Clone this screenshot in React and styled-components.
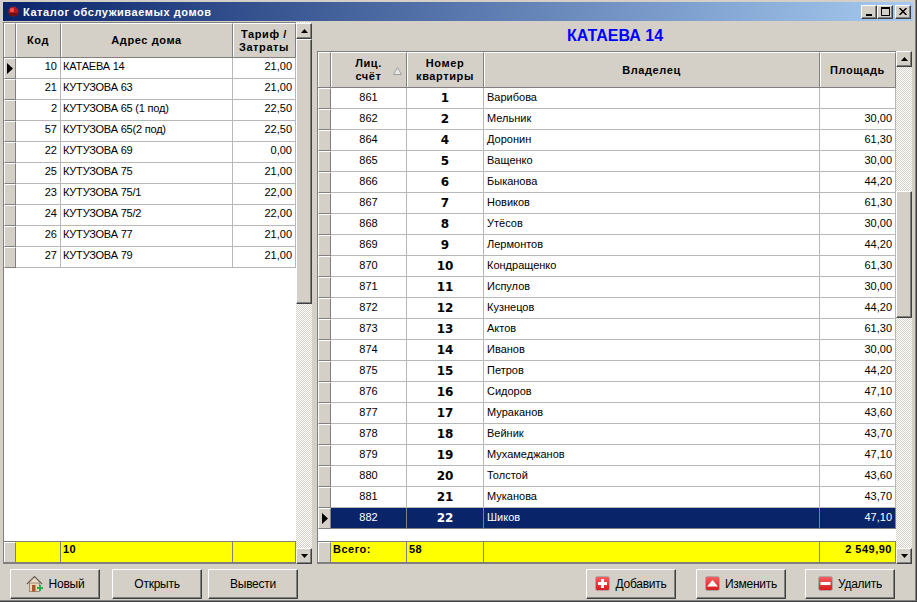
import React from "react";
import styled, { createGlobalStyle, css } from "styled-components";

const Global = createGlobalStyle`
  html, body { margin: 0; padding: 0; background: #d4d0c8; }
  #root { width: 917px; height: 602px; overflow: hidden; }
  * { box-sizing: border-box; }
`;

const face = "#d4d0c8";
const checker = css`
  background-color: #fff;
  background-image: conic-gradient(${face} 25%, #fff 0 50%, ${face} 0 75%, #fff 0);
  background-size: 2px 2px;
`;
const raised = css`
  border-top: 1px solid #fff;
  border-left: 1px solid #fff;
  border-right: 1px solid #404040;
  border-bottom: 1px solid #404040;
  box-shadow: inset -1px -1px 0 #808080;
`;

const Window = styled.div`
  width: 917px;
  height: 602px;
  display: flex;
  flex-direction: column;
  background: ${face};
  padding: 2px 3px 0 3px;
  border-right: 1px solid #404040;
  border-bottom: 1px solid #404040;
  box-shadow: inset -1px -1px 0 #808080;
  font-family: "Liberation Sans", Arial, sans-serif;
  font-size: 11px;
  color: #000;
`;
const TitleBar = styled.div`
  height: 19px;
  flex: none;
  display: flex;
  align-items: center;
  padding: 0 2px 0 4px;
  background: linear-gradient(90deg, #0a246a, #a6caf0);
  color: #fff;
  font-weight: 700;
  font-size: 11px;
  letter-spacing: 0.57px;
`;
const TitleText = styled.span`
  flex: 1;
  margin-left: 3px;
`;
const CaptionBtn = styled.div`
  width: 16px;
  height: 14px;
  background: ${face};
  ${raised}
  margin-left: ${(p) => p.$gap || 0}px;
  display: flex;
  align-items: center;
  justify-content: center;
`;
const Body = styled.div`
  flex: none;
  display: flex;
  height: 543px;
`;
const LeftPane = styled.div`
  width: 309px;
  padding-top: 1px;
  display: flex;
`;
const RightPane = styled.div`
  margin-left: 5px;
  width: 596px;
  display: flex;
  flex-direction: column;
`;
const Heading = styled.div`
  height: 30px;
  flex: none;
  display: flex;
  align-items: center;
  justify-content: center;
  color: #0000ff;
  font-weight: 700;
  font-size: 16px;
`;
const GridRow = styled.div`
  flex: 1;
  display: flex;
  min-height: 0;
`;
const Grid = styled.div`
  width: ${(p) => p.$w}px;
  display: flex;
  flex-direction: column;
  border: 1px solid #808080;
  border-right: none;
  background: #fff;
`;
const Header = styled.div`
  flex: none;
  height: ${(p) => p.$h}px;
  display: grid;
  grid-template-columns: ${(p) => p.$cols};
  background: ${face};
  border-bottom: 1px solid #808080;
`;
const HeadCell = styled.div`
  position: relative;
  display: flex;
  align-items: center;
  justify-content: center;
  text-align: center;
  font-weight: 700;
  font-size: 11px;
  line-height: 13px;
  letter-spacing: 0.6px;
  white-space: pre-line;
  padding-right: 1px;
  border-top: 1px solid #fff;
  border-left: 1px solid #fff;
  border-right: 1px solid #808080;
`;
const SortMark = styled.svg`
  position: absolute;
  right: 4px;
  top: 14px;
`;
const Rows = styled.div`
  flex: 1;
  min-height: 0;
`;
const Row = styled.div`
  height: 21px;
  display: grid;
  grid-template-columns: ${(p) => p.$cols};
  background: ${(p) => (p.$sel ? "#0a246a" : "#fff")};
  color: ${(p) => (p.$sel ? "#fff" : "#000")};
`;
const Indicator = styled.div`
  background: ${face};
  border-top: 1px solid #fff;
  border-left: 1px solid #fff;
  border-right: 1px solid #808080;
  border-bottom: 1px solid #808080;
  display: flex;
  align-items: center;
  justify-content: center;
`;
const Cell = styled.div`
  display: flex;
  align-items: center;
  justify-content: ${(p) => p.$align || "flex-start"};
  padding: 0 2px ${(p) => p.$pb ?? 2}px ${(p) => p.$pl ?? 2}px;
  padding-right: ${(p) => (p.$align === "flex-end" ? 3 : 2)}px;
  border-right: 1px solid ${(p) => (p.$sel ? "#808080" : "#b8b8b8")};
  border-bottom: 1px solid ${(p) => (p.$sel ? "#808080" : "#b8b8b8")};
  font-size: 11px;
  letter-spacing: ${(p) => p.$ls || 0}px;
  white-space: nowrap;
`;
const AptNum = styled(Cell)`
  font-family: "DejaVu Sans", Verdana, sans-serif;
  font-weight: 700;
  font-size: 12px;
  padding-bottom: 0;
`;
const Footer = styled.div`
  flex: none;
  height: 22px;
  display: grid;
  grid-template-columns: ${(p) => p.$cols};
  border-top: 1px solid #808080;
  border-bottom: 1px solid #808080;
  background: #ffff00;
`;
const FootCell = styled.div`
  display: flex;
  align-items: center;
  justify-content: ${(p) => p.$align || "flex-start"};
  padding: 0 3px 6px 2px;
  border-right: 1px solid #808080;
  font-weight: 700;
  font-size: 11px;
  letter-spacing: 0.5px;
  white-space: nowrap;
`;
const FootGrey = styled(FootCell)`
  background: ${face};
  border-left: 1px solid #fff;
  border-top: 1px solid #fff;
`;
const Scrollbar = styled.div`
  width: 16px;
  display: flex;
  flex-direction: column;
  flex: none;
  ${checker}
`;
const ScrollBtn = styled.div`
  flex: none;
  width: 16px;
  height: 16px;
  background: ${face};
  ${raised}
  display: flex;
  align-items: center;
  justify-content: center;
`;
const Track = styled.div`
  flex: none;
  height: ${(p) => p.$h}px;
`;
const TrackFill = styled.div`
  flex: 1;
`;
const Thumb = styled.div`
  flex: none;
  height: ${(p) => p.$h}px;
  background: ${face};
  ${raised}
`;
const ButtonBar = styled.div`
  flex: none;
  height: 36px;
  display: flex;
  padding: 5px 0 0 7px;
`;
const Btn = styled.button`
  width: 90px;
  height: 30px;
  margin-left: ${(p) => p.$ml || 0}px;
  padding: 0 0 1px 0;
  background: ${face};
  ${raised}
  display: flex;
  align-items: center;
  justify-content: center;
  gap: 5px;
  font-family: "Liberation Sans", Arial, sans-serif;
  font-size: 12px;
  letter-spacing: -0.25px;
  color: #000;
`;

const Triangle = ({ dir = "up", color = "#000" }) => (
  <svg width="7" height="4" viewBox="0 0 7 4">
    <path d={dir === "up" ? "M3.5 0L7 4H0Z" : "M0 0H7L3.5 4Z"} fill={color} />
  </svg>
);
const RowArrow = () => (
  <svg width="6" height="11" viewBox="0 0 6 11">
    <path d="M0 0L6 5.5L0 11Z" fill="#000" />
  </svg>
);
const AppIcon = () => (
  <svg width="13" height="13" viewBox="0 0 13 13">
    <circle cx="6.5" cy="6.5" r="5" fill="#b01818" />
    <circle cx="5" cy="5" r="2.2" fill="#f05050" />
    <rect x="2" y="8" width="9" height="3" rx="1" fill="#701010" />
  </svg>
);
const HouseIcon = () => (
  <svg width="18" height="18" viewBox="0 0 18 18">
    <path d="M1 9L8.5 1.5L16 9" fill="#e8dcc8" stroke="#6a5a50" strokeWidth="1.2" />
    <rect x="3.5" y="8" width="10" height="8.5" fill="#e8d4b8" stroke="#8a7a68" strokeWidth="0.8" />
    <rect x="6" y="10" width="3.5" height="6.5" fill="#a8582a" />
    <rect x="11" y="12" width="6" height="2" fill="#22b04a" />
    <rect x="13" y="10" width="2" height="6" fill="#22b04a" />
  </svg>
);
const RedIcon = ({ kind }) => (
  <svg width="15" height="15" viewBox="0 0 15 15">
    <defs>
      <linearGradient id="rg" x1="0" y1="0" x2="0" y2="1">
        <stop offset="0" stopColor="#f86060" />
        <stop offset="1" stopColor="#d81818" />
      </linearGradient>
    </defs>
    <rect x="0.5" y="0.5" width="14" height="14" rx="2" fill="url(#rg)" stroke="#a8a8a8" />
    {kind === "plus" && <path d="M6 3h3v3h3v3H9v3H6V9H3V6h3z" fill="#fff" />}
    {kind === "up" && <path d="M7.5 4l5.5 6.5H2z" fill="#fff" />}
    {kind === "minus" && <rect x="2.5" y="6" width="10" height="3" fill="#fff" />}
  </svg>
);

const houses = [
  [10, "КАТАЕВА 14", "21,00"],
  [21, "КУТУЗОВА 63", "21,00"],
  [2, "КУТУЗОВА 65 (1 под)", "22,50"],
  [57, "КУТУЗОВА 65(2 под)", "22,50"],
  [22, "КУТУЗОВА 69", "0,00"],
  [25, "КУТУЗОВА 75", "21,00"],
  [23, "КУТУЗОВА 75/1", "22,00"],
  [24, "КУТУЗОВА 75/2", "22,00"],
  [26, "КУТУЗОВА 77", "21,00"],
  [27, "КУТУЗОВА 79", "21,00"],
];
const flats = [
  [861, 1, "Варибова", ""],
  [862, 2, "Мельник", "30,00"],
  [864, 4, "Доронин", "61,30"],
  [865, 5, "Ващенко", "30,00"],
  [866, 6, "Быканова", "44,20"],
  [867, 7, "Новиков", "61,30"],
  [868, 8, "Утёсов", "30,00"],
  [869, 9, "Лермонтов", "44,20"],
  [870, 10, "Кондращенко", "61,30"],
  [871, 11, "Испулов", "30,00"],
  [872, 12, "Кузнецов", "44,20"],
  [873, 13, "Актов", "61,30"],
  [874, 14, "Иванов", "30,00"],
  [875, 15, "Петров", "44,20"],
  [876, 16, "Сидоров", "47,10"],
  [877, 17, "Мураканов", "43,60"],
  [878, 18, "Вейник", "43,70"],
  [879, 19, "Мухамеджанов", "47,10"],
  [880, 20, "Толстой", "43,60"],
  [881, 21, "Муканова", "43,70"],
  [882, 22, "Шиков", "47,10"],
];

const leftCols = "12px 45px 172px 63px";
const rightCols = "13px 76px 77px 336px 76px";

export default function App() {
  return (
    <Window>
      <Global />
      <TitleBar>
        <AppIcon />
        <TitleText>Каталог обслуживаемых домов</TitleText>
        <CaptionBtn>
          <svg width="8" height="9" viewBox="0 0 8 9"><rect x="1" y="7" width="6" height="2" fill="#000" /></svg>
        </CaptionBtn>
        <CaptionBtn>
          <svg width="9" height="9" viewBox="0 0 9 9"><path d="M0.5 1.5H8.5V8.5H0.5Z" fill="none" stroke="#000" /><rect y="0" width="9" height="2" fill="#000" /></svg>
        </CaptionBtn>
        <CaptionBtn $gap={2}>
          <svg width="8" height="7" viewBox="0 0 8 7"><path d="M0.5 0L7.5 7M7.5 0L0.5 7" stroke="#000" strokeWidth="1.5" /></svg>
        </CaptionBtn>
      </TitleBar>
      <Body>
        <LeftPane>
          <Grid $w={293}>
            <Header $h={35} $cols={leftCols}>
              <HeadCell />
              <HeadCell>Код</HeadCell>
              <HeadCell>Адрес дома</HeadCell>
              <HeadCell>{"Тариф /\nЗатраты"}</HeadCell>
            </Header>
            <Rows>
              {houses.map((h, i) => (
                <Row key={h[0]} $cols={leftCols}>
                  <Indicator>{i === 0 && <RowArrow />}</Indicator>
                  <Cell $align="flex-end" $pb={4}>{h[0]}</Cell>
                  <Cell $ls={-0.2} $pb={4}>{h[1]}</Cell>
                  <Cell $align="flex-end" $pb={4}>{h[2]}</Cell>
                </Row>
              ))}
            </Rows>
            <Footer $cols={leftCols}>
              <FootGrey />
              <FootCell />
              <FootCell>10</FootCell>
              <FootCell />
            </Footer>
          </Grid>
          <Scrollbar>
            <Track $h={1} />
            <ScrollBtn><Triangle /></ScrollBtn>
            <Thumb $h={265} />
            <TrackFill />
            <ScrollBtn><Triangle dir="down" /></ScrollBtn>
          </Scrollbar>
        </LeftPane>
        <RightPane>
          <Heading>КАТАЕВА 14</Heading>
          <GridRow>
            <Grid $w={579}>
              <Header $h={36} $cols={rightCols}>
                <HeadCell />
                <HeadCell>
                  {"Лиц.\nсчёт"}
                  <SortMark width="9" height="8" viewBox="0 0 9 8">
                    <path d="M4.5 0.5L8.5 7.5H0.5Z" fill="#e8e8e8" stroke="#a0a0a0" />
                  </SortMark>
                </HeadCell>
                <HeadCell>{"Номер\nквартиры"}</HeadCell>
                <HeadCell>Владелец</HeadCell>
                <HeadCell>Площадь</HeadCell>
              </Header>
              <Rows>
                {flats.map((f, i) => {
                  const sel = i === flats.length - 1;
                  return (
                    <Row key={f[0]} $cols={rightCols} $sel={sel}>
                      <Indicator>{sel && <RowArrow />}</Indicator>
                      <Cell $align="center" $sel={sel}>{f[0]}</Cell>
                      <AptNum $align="center" $sel={sel}>{f[1]}</AptNum>
                      <Cell $pl={3} $sel={sel}>{f[2]}</Cell>
                      <Cell $align="flex-end" $sel={sel}>{f[3]}</Cell>
                    </Row>
                  );
                })}
              </Rows>
              <Footer $cols={rightCols}>
                <FootGrey />
                <FootCell>Всего:</FootCell>
                <FootCell>58</FootCell>
                <FootCell />
                <FootCell $align="flex-end">2 549,90</FootCell>
              </Footer>
            </Grid>
            <Scrollbar>
              <ScrollBtn><Triangle /></ScrollBtn>
              <Track $h={124} />
              <Thumb $h={127} />
              <TrackFill />
              <ScrollBtn><Triangle dir="down" /></ScrollBtn>
            </Scrollbar>
          </GridRow>
        </RightPane>
      </Body>
      <ButtonBar>
        <Btn><HouseIcon />Новый</Btn>
        <Btn $ml={12}>Открыть</Btn>
        <Btn $ml={6}>Вывести</Btn>
        <Btn $ml={288}><RedIcon kind="plus" />Добавить</Btn>
        <Btn $ml={20}><RedIcon kind="up" />Изменить</Btn>
        <Btn $ml={19}><RedIcon kind="minus" />Удалить</Btn>
      </ButtonBar>
    </Window>
  );
}
